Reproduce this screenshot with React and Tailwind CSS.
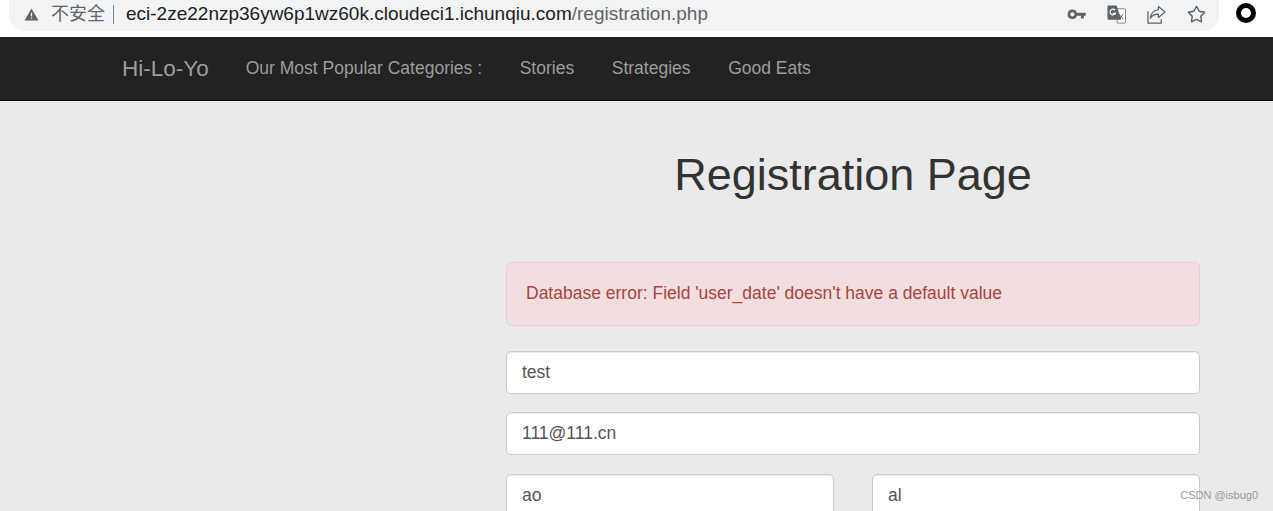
import { Star } from "lucide-react";

const font = "font-['Liberation_Sans','Noto_Sans_CJK_SC',sans-serif]";

function Field({ value, className = "" }) {
  return (
    <div className={`h-[43px] rounded-[5px] border border-[#cccccc] bg-white pl-[15px] text-[17.5px] leading-[40px] text-[#555555] shadow-[inset_0_1px_1px_rgba(0,0,0,0.075)] ${className}`}>
      {value}
    </div>
  );
}

function KeyIcon() {
  return (
    <svg viewBox="0 0 20 12" className="h-[11px] w-[19px]" fill="#5f6368">
      <path d="M5.5 0.5a5.2 5.2 0 0 1 4.9 3.5H20v3.4h-2v3h-3.2v-3h-4.4A5.2 5.2 0 1 1 5.5 0.5zm0 3a2.3 2.3 0 1 0 0 4.6 2.3 2.3 0 0 0 0-4.6z" />
    </svg>
  );
}

function TranslateIcon() {
  return (
    <svg viewBox="0 0 20 20" className="h-[19px] w-[19px]">
      <path d="M9 4h9.5a1 1 0 0 1 1 1v13a1 1 0 0 1-1 1H11z" fill="#fff" stroke="#7b7f84" />
      <path d="M1.5 0.5h8.6L15 15.5H1.5a1 1 0 0 1-1-1V1.5a1 1 0 0 1 1-1z" fill="#5f6368" />
      <path d="M10.6 5.5a3 3 0 1 0 0.4 3.2H8" fill="none" stroke="#fff" strokeWidth="1.2" transform="translate(-2 0)" />
      <path d="M12.5 9.5l4.5 5.5M17 9.5 13 15" stroke="#5f6368" strokeWidth="1" fill="none" />
    </svg>
  );
}

function ShareIcon() {
  return (
    <svg viewBox="0 0 20 20" className="h-[19px] w-[19px]" fill="none" stroke="#5f6368" strokeWidth="1.3">
      <path d="M1 6.5v12.5h14v-4" />
      <path d="M12 1.5l7 5.8-7 5.8v-3.4c-4 0-6.5 1-8.5 4.3 0.5-5 3.5-8.5 8.5-9z" strokeLinejoin="round" />
    </svg>
  );
}

export default function App() {
  return (
    <div className={`relative h-[511px] w-[1273px] overflow-hidden bg-[#eaeaea] ${font}`}>
      <div className="h-[37px] bg-white">
        <div className="ml-[9px] flex h-[31px] w-[1210px] items-center rounded-br-[16px] rounded-bl-[16px] bg-[#f1f3f4] pb-[3px] pl-[15px] pr-[13px]">
          <svg viewBox="0 0 16 14" className="h-[13px] w-[15px]" fill="#5f6368">
            <path d="M8 0.5 15.5 13.5H0.5z" />
            <path d="M7.3 5h1.4v4.2H7.3zM7.3 10.2h1.4v1.4H7.3z" fill="#f1f3f4" />
          </svg>
          <span className="ml-[12px] text-[18px] leading-none text-[#5f6368]">不安全</span>
          <span className="ml-[8px] h-[19px] w-px bg-[#80868b]" />
          <span className="ml-[12px] text-[19px] text-[#202124]">
            eci-2ze22nzp36yw6p1wz60k.cloudeci1.ichunqiu.com<span className="text-[#5f6368]">/registration.php</span>
          </span>
          <div className="ml-auto flex items-center gap-[21px]">
            <KeyIcon />
            <TranslateIcon />
            <ShareIcon />
            <Star className="h-[19px] w-[19px] text-[#5f6368]" strokeWidth={1.8} />
          </div>
        </div>
      </div>
      <div className="absolute right-[17px] top-[3px] h-[20px] w-[20px] rounded-full border-[5px] border-black bg-white" />

      <nav className="flex h-[64px] items-center border-b border-black bg-[#222222] pl-[122px] text-[#9d9d9d]">
        <span className="text-[22.5px]">Hi-Lo-Yo</span>
        <div className="ml-[37px] flex gap-[37.6px] text-[17.5px]">
          <span>Our Most Popular Categories :</span>
          <span>Stories</span>
          <span>Strategies</span>
          <span>Good Eats</span>
        </div>
      </nav>

      <main className="ml-[506px] w-[694px]">
        <h1 className="mt-[47px] text-center text-[45px] font-normal leading-[54px] text-[#333333]">Registration Page</h1>
        <div className="mt-[60px] h-[64px] rounded-[5px] border border-[#ebccd1] bg-[#f2dede] pl-[19px] text-[17.5px] leading-[60px] text-[#a94442]">
          Database error: Field 'user_date' doesn't have a default value
        </div>
        <Field value="test" className="mt-[25px]" />
        <Field value="111@111.cn" className="mt-[18px]" />
        <div className="mt-[19px] flex justify-between">
          <Field value="ao" className="w-[328px]" />
          <Field value="al" className="w-[328px]" />
        </div>
      </main>

      <span className="absolute right-[15px] top-[488px] text-[11px] leading-[14px] text-[#9a9a9a]">CSDN @isbug0</span>
    </div>
  );
}
